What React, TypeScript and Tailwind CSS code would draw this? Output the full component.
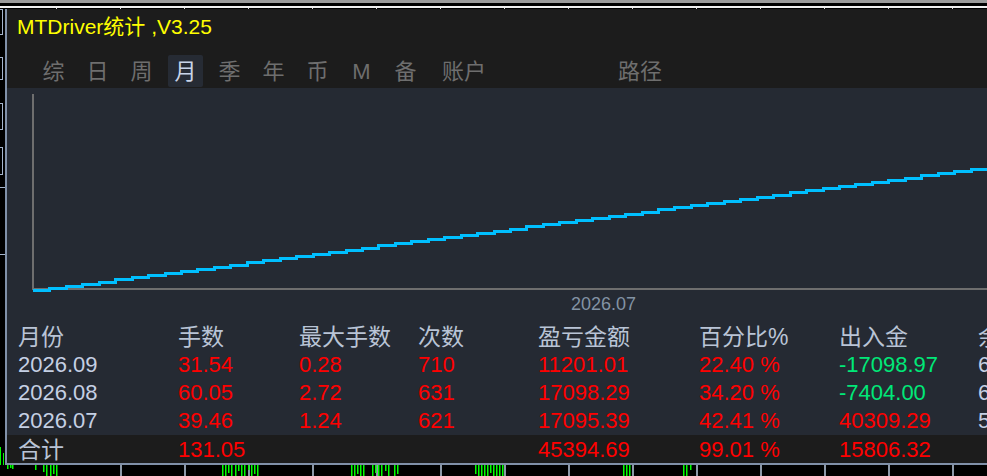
import React from 'react'

const font = "font-['Liberation_Sans','Noto_Sans_CJK_SC',sans-serif]"

const tabs = ['综', '日', '周', '月', '季', '年', '币', 'M', '备']

const rows = [
  { m: '2026.09', lots: '31.54', max: '0.28', cnt: '710', pnl: '11201.01', pct: '22.40 %', io: '-17098.97', green: true, bal: '6' },
  { m: '2026.08', lots: '60.05', max: '2.72', cnt: '631', pnl: '17098.29', pct: '34.20 %', io: '-7404.00', green: true, bal: '6' },
  { m: '2026.07', lots: '39.46', max: '1.24', cnt: '621', pnl: '17095.39', pct: '42.41 %', io: '40309.29', green: false, bal: '5' },
]

const grid = 'grid grid-cols-[160px_121px_119px_120px_161px_140px_139px_100px] pl-[11px] whitespace-nowrap'

// green histogram bars in the chart behind the panel: [x, height]
const bars: [number, number][] = [
  [7, 4], [10, 3], [12, 4], [35, 5], [43, 7], [46, 11], [50, 11], [53, 9], [56, 11],
  [222, 11], [225, 11], [228, 8], [231, 11], [235, 11], [238, 6], [241, 11], [244, 11], [248, 5], [251, 11], [254, 9], [257, 11],
  [351, 11], [354, 11], [357, 9], [360, 11], [363, 11], [372, 11], [375, 8], [378, 11], [381, 11], [385, 6], [388, 11], [394, 11], [397, 9],
  [475, 9], [478, 11], [481, 11], [484, 11], [487, 11], [490, 8], [493, 11], [496, 11], [499, 11], [502, 11],
  [623, 11], [626, 11], [629, 11], [683, 11], [686, 11], [690, 5],
]

const seps = Array.from({ length: 15 }, (_, k) => 56 + 64 * k)

function stairs() {
  const n = 58
  let d = 'M26 202.5'
  for (let i = 1; i <= n; i++) {
    const x = Math.round(26 + (i * 954) / n)
    const y = Math.round(202 - (i * 123) / n) + 0.5
    d += ` H${x} V${y}`
  }
  return d
}

function LeftStrip() {
  const box = 'w-[3px] border-t border-r border-b border-[#a4b4cc]'
  return (
    <div className="flex w-[5px] flex-col">
      <div className={`${box} h-[26px]`} />
      <div className={`${box} mt-[22px] h-[23px]`} />
      <div className={`${box} mt-[23px] h-[27px]`} />
      <div className={`${box} mt-[17px] h-[28px]`} />
      <div className="mt-[12px] h-px w-[5px] bg-[#a4b4cc]" />
      <div className="mt-[66px] h-px w-[5px] bg-[#a4b4cc]" />
      <div className="flex-1" />
      <svg width="5" height="18" className="block">
        <rect x="0" y="0" width="1" height="18" fill="#00ff00" />
        <rect x="3" y="6" width="1" height="12" fill="#00ff00" />
      </svg>
    </div>
  )
}

export default function App() {
  return (
    <div className={`flex h-[476px] w-[987px] flex-col overflow-hidden bg-black ${font}`}>
      <div className="h-[3px] bg-[#9b9b9b]" />
      <div className="h-[3px] bg-black" />
      <div className="h-[2px] bg-[#f0f0f0]" />
      <svg width="987" height="1" className="block">
        {seps.map((x) => (
          <rect key={x} x={x} y="0" width="1" height="1" fill="#d8d8d8" />
        ))}
      </svg>

      <div className="flex h-[456px]">
        <LeftStrip />
        <div className="flex min-w-0 flex-1 flex-col border-b-2 border-l-2 border-[#8090a8]">
          {/* header */}
          <div className="h-[79px] bg-[#1c1c1c] pt-[6px]">
            <div className="h-[24px] pl-[10px] text-[21px] leading-[24px] text-[#ffff00]">MTDriver统计 ,V3.25</div>
            <div className="mt-[16px] flex h-[32px] items-center gap-[9px] pl-[29px] text-[22px] text-[#6e6e6e]">
              {tabs.map((t) =>
                t === '月' ? (
                  <div key={t} className="flex h-[32px] w-[35px] items-center justify-center rounded-[2px] bg-[#262b34] text-[#c9d4e8]">
                    {t}
                  </div>
                ) : (
                  <div key={t} className="w-[35px] text-center">{t}</div>
                ),
              )}
              <div className="w-[64px] text-center">账户</div>
              <div className="ml-[103px] w-[64px] text-center">路径</div>
            </div>
          </div>

          {/* chart */}
          <div className="h-[235px] bg-[#252a33]">
            <svg width="980" height="206" className="block">
              <line x1="26" y1="6" x2="26" y2="202" stroke="#6e6e6e" strokeWidth="2" />
              <line x1="26" y1="201" x2="980" y2="201" stroke="#6e6e6e" strokeWidth="2" />
              <path d={stairs()} fill="none" stroke="#00bfff" strokeWidth="3" shapeRendering="crispEdges" />
            </svg>
            <div className="h-[20px] pl-[564px] text-[18px] leading-[20px] text-[#8393a4]">2026.07</div>
          </div>

          {/* table */}
          <div className="bg-[#252a33]">
            <div className={`${grid} h-[28px] items-center text-[23px] leading-[28px] text-[#b9c4d6]`}>
              <div>月份</div>
              <div>手数</div>
              <div>最大手数</div>
              <div>次数</div>
              <div>盈亏金额</div>
              <div>百分比%</div>
              <div>出入金</div>
              <div>余额</div>
            </div>
            {rows.map((r) => (
              <div key={r.m} className={`${grid} h-[28px] items-center text-[22px] leading-[28px] text-[#ff0000]`}>
                <div className="text-[#c5d0e4]">{r.m}</div>
                <div>{r.lots}</div>
                <div>{r.max}</div>
                <div>{r.cnt}</div>
                <div>{r.pnl}</div>
                <div>{r.pct}</div>
                <div className={r.green ? 'text-[#00e878]' : ''}>{r.io}</div>
                <div className="text-[#c5d0e4]">{r.bal}</div>
              </div>
            ))}
          </div>
          <div className={`${grid} h-[28px] items-center bg-[#1c1c1c] pt-[2px] text-[22px] leading-[26px] text-[#ff0000]`}>
            <div className="text-[23px] text-[#b9c4d6]">合计</div>
            <div>131.05</div>
            <div />
            <div />
            <div>45394.69</div>
            <div>99.01 %</div>
            <div>15806.32</div>
            <div />
          </div>
        </div>
      </div>

      {/* chart strip behind the panel */}
      <svg width="987" height="11" className="block">
        {seps.map((x) => (
          <rect key={x} x={x + 64} y="0" width="2" height="11" fill="#8c98a8" />
        ))}
        {bars.map(([x, h], i) => (
          <rect key={i} x={x} y="0" width="1.5" height={h} fill="#00ff00" />
        ))}
      </svg>
    </div>
  )
}
